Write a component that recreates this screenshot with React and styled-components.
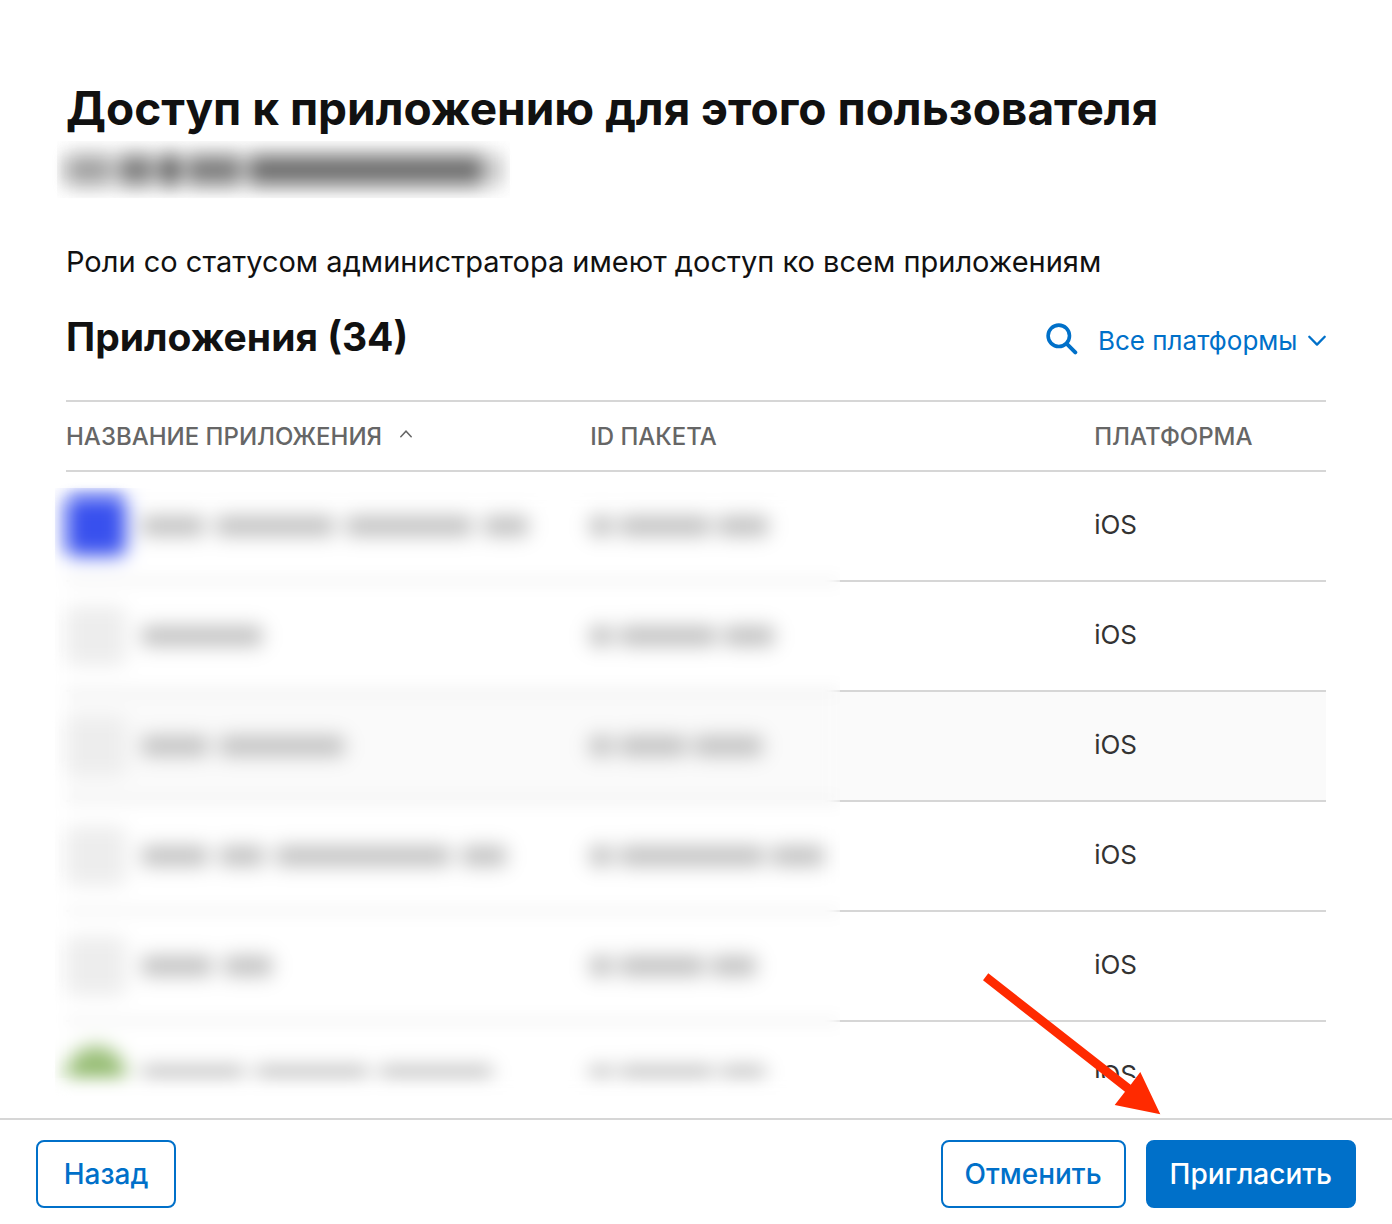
import React from 'react'
import styled, { createGlobalStyle } from 'styled-components'

const GlobalStyle = createGlobalStyle`
  * {
    box-sizing: border-box;
  }

  body {
    margin: 0;
    background: #fff;
    color: #111;
    font-family: Inter, 'Liberation Sans', sans-serif;
  }

  button, select {
    font-family: inherit;
  }
`

// widths of the hidden words, in pixels
const apps = [
  { icon: 'blue', name: [62, 118, 126, 44], bundle: [22, 90, 50], platform: 'iOS' },
  { name: [120], bundle: [22, 96, 50], platform: 'iOS' },
  { name: [66, 124], bundle: [22, 66, 68], platform: 'iOS', hovered: true },
  { name: [66, 44, 174, 44], bundle: [22, 144, 52], platform: 'iOS' },
  { name: [70, 48], bundle: [22, 84, 44], platform: 'iOS' },
  { icon: 'green', name: [102, 112, 112], bundle: [22, 93, 44], platform: 'iOS' }
]

const platforms = ['Все платформы', 'iOS', 'macOS', 'tvOS']

const SearchIcon = () => (
  <svg width="32" height="32" viewBox="0 0 32 32" fill="none" stroke="currentColor" aria-hidden="true">
    <circle cx="12.8" cy="12.8" r="10.7" strokeWidth="3.6" />
    <path d="M20.8 20.8L29.3 29.3" strokeWidth="4" strokeLinecap="round" />
  </svg>
)

const ChevronDown = () => (
  <svg width="18" height="12" viewBox="0 0 18 12" fill="none" stroke="currentColor" aria-hidden="true">
    <path d="M1.3 1.8L9 9.6L16.7 1.8" strokeWidth="2.3" strokeLinecap="round" strokeLinejoin="round" />
  </svg>
)

const SortArrow = () => (
  <svg width="12" height="12" viewBox="0 0 12 12" fill="none" stroke="currentColor" aria-hidden="true">
    <path d="M0.8 6.8L6 1.2L11.2 6.8" strokeWidth="1.5" strokeLinecap="round" />
  </svg>
)

const Arrow = () => (
  <ArrowSvg width="178" height="142" viewBox="983 973 178 142" aria-hidden="true">
    <path d="M988.3 973.3L1130.7 1084.7L1140.3 1072L1160.3 1114.3L1114.7 1105L1125 1091.7L983 980.3Z" fill="#ff2a00" />
  </ArrowSvg>
)

const Words = ({ widths, gap }) => (
  <WordList $gap={gap}>
    {widths.map((width, index) => (
      <Word key={index} style={{ width }} />
    ))}
  </WordList>
)

class AppTable extends React.Component {

  renderRows(){
    return apps.map((app, index)=>{
      return (
        <Row key={index} $hovered={app.hovered}>
          <Cell>
            <AppName>
              <AppIcon $kind={app.icon} />
              <Words widths={app.name} gap={12} />
            </AppName>
          </Cell>
          <Cell><Words widths={app.bundle} gap={8} /></Cell>
          <PlatformCell>{app.platform}</PlatformCell>
        </Row>
      )
    })
  }

  render () {
    return (
      <TableArea>
        <TableClip>
          <Table>
            <thead>
              <tr>
                <HeadCell $width="41.6%" aria-sort="ascending">
                  <SortButton type="button">НАЗВАНИЕ ПРИЛОЖЕНИЯ <SortArrow /></SortButton>
                </HeadCell>
                <HeadCell $width="40%">ID ПАКЕТА</HeadCell>
                <HeadCell $width="18.4%">ПЛАТФОРМА</HeadCell>
              </tr>
            </thead>
            <tbody>{this.renderRows()}</tbody>
          </Table>
        </TableClip>
        <TableBlur><Blur /></TableBlur>
      </TableArea>
    )
  }
}

const App = () => (
  <Page>
    <GlobalStyle />
    <Main>
      <Title>
        Доступ к приложению для этого пользователя
        <HiddenName>
          <NamePart $width={46} $tone="#a0a0a0" />
          <NamePart $width={36} $tone="#7c7c7c" />
          <NamePart $width={20} $tone="#505050" />
          <NamePart $width={56} $tone="#7c7c7c" />
          <NamePart $width={236} $tone="#6c6c6c" />
          <NamePart $width={8} $tone="#909090" />
          <NameBlur><Blur /></NameBlur>
        </HiddenName>
      </Title>
      <Note>Роли со статусом администратора имеют доступ ко всем приложениям</Note>
      <Toolbar>
        <Subtitle>Приложения (34)</Subtitle>
        <Filters>
          <IconButton type="button" aria-label="Поиск"><SearchIcon /></IconButton>
          <PlatformLabel>
            <PlatformSelect aria-label="Платформа">
              {platforms.map((name) => <option key={name}>{name}</option>)}
            </PlatformSelect>
            <ChevronDown />
          </PlatformLabel>
        </Filters>
      </Toolbar>
      <AppTable />
    </Main>
    <Footer>
      <Button type="button">Назад</Button>
      <Actions>
        <Button type="button">Отменить</Button>
        <Button type="button" $primary>Пригласить</Button>
      </Actions>
      <Arrow />
    </Footer>
  </Page>
)

const Page = styled.div`
  display: flex;
  flex-direction: column;
  height: 100vh;
`

const Main = styled.main`
  display: flex;
  flex-direction: column;
  flex: 1;
  min-height: 0;
  padding: 78px 66px 40px;
`

const Title = styled.h1`
  margin: 0;
  font-size: 46px;
  font-weight: 700;
  line-height: 60px;
`

const HiddenName = styled.span`
  position: relative;
  display: flex;
  align-items: center;
  gap: 6px;
  width: fit-content;
  height: 64px;
`

const NamePart = styled.span`
  width: ${(props) => props.$width}px;
  height: 30px;
  background: ${(props) => props.$tone};
  filter: blur(6px);
`

// reaches past its frame, so that the blur stays even up to the edge
const Blur = styled.span`
  position: absolute;
  inset: -24px;
  backdrop-filter: blur(8px);
`

const NameBlur = styled.span`
  position: absolute;
  top: 3px;
  right: -12px;
  bottom: 4px;
  left: -9px;
  overflow: hidden;
`

const Note = styled.p`
  margin: 40px 0 0;
  font-size: 29px;
  line-height: 40px;
`

const Toolbar = styled.div`
  display: flex;
  align-items: center;
  justify-content: space-between;
  margin: 28px 0 36px;
`

const Subtitle = styled.h2`
  margin: 0;
  font-size: 39px;
  font-weight: 700;
  line-height: 54px;
`

const Filters = styled.div`
  display: flex;
  align-items: center;
  gap: 20px;
  padding-top: 4px;
  color: #0070c9;
`

const IconButton = styled.button`
  display: flex;
  padding: 0;
  border: none;
  background: none;
  color: inherit;
`

const PlatformLabel = styled.label`
  display: flex;
  align-items: center;
  gap: 10px;
  padding-top: 4px;
`

const PlatformSelect = styled.select`
  appearance: none;
  padding: 0;
  border: none;
  outline: none;
  background: none;
  color: inherit;
  font-size: 26px;
  line-height: 32px;
`

const TableArea = styled.div`
  position: relative;
  flex: 1;
  min-height: 0;
`

const TableClip = styled.div`
  height: 100%;
  margin-left: -24px;
  padding-left: 24px;
  overflow: hidden;
`

const Table = styled.table`
  width: 100%;
  table-layout: fixed;
  border-spacing: 0;
  border-top: 2px solid #d6d6d6;
`

const HeadCell = styled.th`
  width: ${(props) => props.$width};
  height: 70px;
  padding: 0;
  border-bottom: 2px solid #d6d6d6;
  color: #666;
  font-size: 24px;
  font-weight: 500;
  text-align: left;
`

const SortButton = styled.button`
  display: flex;
  align-items: center;
  gap: 18px;
  padding: 0;
  border: none;
  background: none;
  color: inherit;
  font-size: inherit;
  font-weight: inherit;
  white-space: nowrap;
`

const Row = styled.tr`
  background: ${(props) => props.$hovered ? '#fafafa' : 'transparent'};
`

const Cell = styled.td`
  height: 110px;
  padding: 0;
  border-bottom: 2px solid #d6d6d6;
  color: #333;
  font-size: 26px;
`

const PlatformCell = styled(Cell)`
  padding-bottom: 4px;
`

const AppName = styled.div`
  display: flex;
  align-items: center;
  gap: 16px;
`

const iconColors = {
  blue: '#3850ee',
  green: '#98be76'
}

const AppIcon = styled.span`
  width: 60px;
  height: 60px;
  border-radius: ${(props) => props.$kind === 'green' ? '30px' : '8px'};
  background: ${(props) => iconColors[props.$kind] || '#ededed'};
  filter: blur(6px);
`

const WordList = styled.span`
  display: flex;
  gap: ${(props) => props.$gap}px;
  filter: blur(6px);
`

const Word = styled.span`
  height: 20px;
  background: #c0c0c0;
`

const TableBlur = styled.div`
  position: absolute;
  top: 88px;
  bottom: -22px;
  left: -11px;
  width: calc(61.4% + 11px);
  overflow: hidden;
`

const Footer = styled.footer`
  position: relative;
  display: flex;
  justify-content: space-between;
  padding: 20px 36px 16px;
  border-top: 2px solid #d6d6d6;
`

const Actions = styled.div`
  display: flex;
  gap: 20px;
`

const Button = styled.button`
  min-width: 140px;
  height: 68px;
  padding: 0 22px;
  border: 2px solid #0070c9;
  border-radius: 8px;
  background: ${(props) => props.$primary ? '#0070c9' : '#fff'};
  color: ${(props) => props.$primary ? '#fff' : '#0070c9'};
  font-size: 28px;
  font-weight: 500;
`

const ArrowSvg = styled.svg`
  position: absolute;
  right: 231px;
  bottom: calc(100% + 5px);
`

export default App
